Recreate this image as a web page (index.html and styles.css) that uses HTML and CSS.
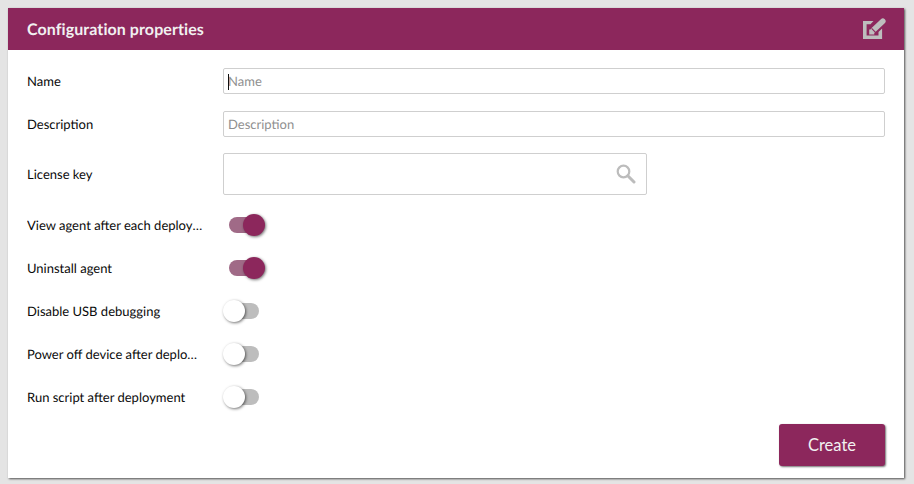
FILE: index.html
```html
<!DOCTYPE html>
<html lang="en">
<head>
<meta charset="utf-8">
<title>Configuration properties</title>
<link rel="stylesheet" href="styles.css">
</head>
<body>
<section class="panel">
  <header class="panel-head">
    <h1 class="panel-title">Configuration properties</h1>
    <svg class="edit-icon" width="23" height="22" viewBox="0 0 23 22" aria-hidden="true">
      <path d="M0 3h10.500l-3 3.200H3.600v11.300h11.900v-3.600l3.600-3.500V21H0z" fill="#bdbdbd"/>
      <path d="M10.500 12 19.800 3.200" fill="none" stroke="#bdbdbd" stroke-width="5.600" stroke-linecap="round"/>
      <path d="M6.200 11.500h2.300l2.800 2.700v2.200h-5.100z" fill="#bdbdbd"/>
      <path d="M8.600 10.300 12.500 14.400" stroke="#8c275c" stroke-width="1.100"/>
    </svg>
  </header>
  <form class="form">
    <div class="row row-name">
      <label class="label">Name</label>
      <div class="field">
        <div class="input"><span class="caret"></span><span class="placeholder">Name</span></div>
      </div>
    </div>
    <div class="row row-desc">
      <label class="label">Description</label>
      <div class="field">
        <div class="input"><span class="placeholder">Description</span></div>
      </div>
    </div>
    <div class="row row-license">
      <label class="label">License key</label>
      <div class="search">
        <svg width="20" height="20" viewBox="0 0 20 20" aria-hidden="true">
          <circle cx="7.500" cy="7.500" r="5.800" fill="none" stroke="#bcbcbc" stroke-width="2.200"/>
          <path d="M11.800 11.800 18 18" stroke="#bcbcbc" stroke-width="3" stroke-linecap="round"/>
        </svg>
      </div>
    </div>
    <div class="row row-toggle">
      <label class="label">View agent after each deployment</label>
      <span class="toggle on"><span class="knob"></span></span>
    </div>
    <div class="row row-toggle">
      <label class="label">Uninstall agent</label>
      <span class="toggle on"><span class="knob"></span></span>
    </div>
    <div class="row row-toggle">
      <label class="label">Disable USB debugging</label>
      <span class="toggle"><span class="knob"></span></span>
    </div>
    <div class="row row-toggle">
      <label class="label">Power off device after deployment</label>
      <span class="toggle"><span class="knob"></span></span>
    </div>
    <div class="row row-toggle">
      <label class="label">Run script after deployment</label>
      <span class="toggle"><span class="knob"></span></span>
    </div>
    <div class="actions">
      <button class="create" type="button">Create</button>
    </div>
  </form>
</section>
</body>
</html>
```
FILE: styles.css
```css
* { box-sizing: border-box; }
html, body { height: 100%; }
body {
  margin: 0;
  padding: 8px 10px 6px 8px;
  background: #e4e4e4;
  font-family: Lato, "Open Sans", sans-serif;
  color: #0a0a0a;
  overflow: hidden;
  text-rendering: geometricPrecision;
}
.panel {
  width: 896px;
  height: 470px;
  background: #fff;
  box-shadow: 1px 1px 2px rgba(0, 0, 0, 0.65);
  display: flex;
  flex-direction: column;
}
.panel-head {
  height: 42px;
  flex: none;
  background: #8c275c;
  display: flex;
  align-items: center;
  justify-content: space-between;
  padding: 0 18px 0 19px;
}
.panel-title {
  margin: 0;
  font-size: 16px;
  font-weight: 700;
  letter-spacing: 0.08px;
  color: #f1f1f1;
}
.edit-icon { display: block; }
.form {
  flex: 1;
  display: flex;
  flex-direction: column;
  padding: 18px 19px 12px 19px;
}
.row {
  display: flex;
  align-items: center;
}
.row-name { height: 26px; }
.row-desc { height: 26px; margin-top: 17px; }
.row-license { height: 42px; margin-top: 16px; margin-bottom: 8px; }
.row-toggle { height: 43px; }
.label {
  width: 176px;
  flex: none;
  margin-right: 20px;
  font-size: 13px;
  line-height: 16px;
  white-space: nowrap;
  overflow: hidden;
  text-overflow: ellipsis;
}
.field { flex: 1; }
.input {
  position: relative;
  height: 26px;
  border: 1px solid #cfcfcf;
  border-radius: 2px;
  padding: 0 4px;
  display: flex;
  align-items: center;
  font-size: 13px;
}
.placeholder { color: #8f8f8f; }
.caret {
  position: absolute;
  left: 4px;
  top: 5px;
  width: 1px;
  height: 16px;
  background: #111;
}
.search {
  width: 424px;
  height: 42px;
  border: 1px solid #cfcfcf;
  border-radius: 2px;
  display: flex;
  align-items: center;
  justify-content: flex-end;
  padding-right: 10px;
}
.search svg { display: block; }
.toggle {
  position: relative;
  display: block;
  width: 30px;
  height: 16px;
  margin-left: 6px;
  border-radius: 8px;
  background: #bdbdbd;
}
.knob {
  position: absolute;
  left: -6px;
  top: -3px;
  width: 22px;
  height: 22px;
  border-radius: 50%;
  background: #fff;
  box-shadow: 1px 1px 3px rgba(0, 0, 0, 0.55);
}
.toggle.on { background: #a06a87; }
.toggle.on .knob { left: 14px; background: #8c275c; }
.actions {
  margin-top: auto;
  display: flex;
  justify-content: flex-end;
}
.create {
  width: 106px;
  height: 42px;
  border: 0;
  border-radius: 3px;
  padding: 0;
  background: #8c275c;
  color: #f1f1f1;
  font-family: inherit;
  font-size: 16.5px;
  box-shadow: 1px 1px 2px rgba(0, 0, 0, 0.55);
}
```
